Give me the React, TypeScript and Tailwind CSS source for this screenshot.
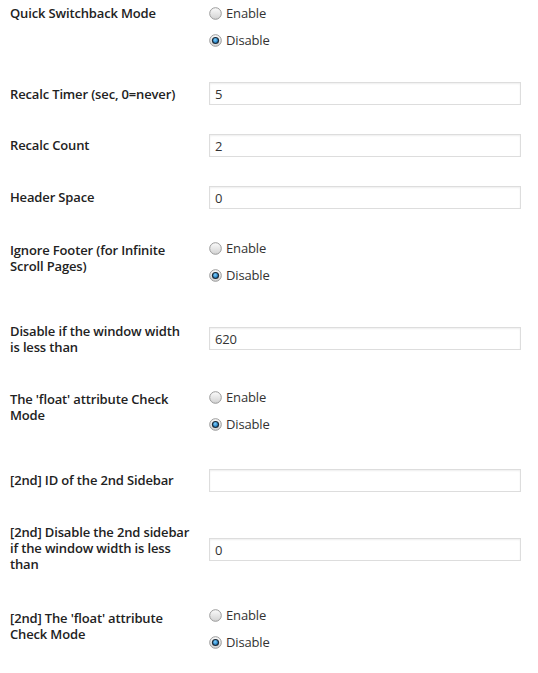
import React from 'react';

type Row =
  | { kind: 'radio'; label: string; h: string; lpt: string; cpt: string; value: 'enable' | 'disable' }
  | { kind: 'input'; label: string; h: string; lpt: string; cpt: string; value: string };

const ROWS: Row[] = [
  { kind: 'radio', label: 'Quick Switchback Mode', h: 'h-[70px]', lpt: 'pt-[5px]', cpt: 'pt-0', value: 'disable' },
  { kind: 'input', label: 'Recalc Timer (sec, 0=never)', h: 'h-[52px]', lpt: 'pt-[16px]', cpt: 'pt-[12px]', value: '5' },
  { kind: 'input', label: 'Recalc Count', h: 'h-[52px]', lpt: 'pt-[15px]', cpt: 'pt-[12px]', value: '2' },
  { kind: 'input', label: 'Header Space', h: 'h-[52px]', lpt: 'pt-[15px]', cpt: 'pt-[12px]', value: '0' },
  { kind: 'radio', label: 'Ignore Footer (for Infinite Scroll Pages)', h: 'h-[80px]', lpt: 'pt-[16px]', cpt: 'pt-[9px]', value: 'disable' },
  { kind: 'input', label: 'Disable if the window width is less than', h: 'h-[70px]', lpt: 'pt-[17px]', cpt: 'pt-[21px]', value: '620' },
  { kind: 'radio', label: "The 'float' attribute Check Mode", h: 'h-[84px]', lpt: 'pt-[15px]', cpt: 'pt-[8px]', value: 'disable' },
  { kind: 'input', label: '[2nd] ID of the 2nd Sidebar', h: 'h-[45px]', lpt: 'pt-[12px]', cpt: 'pt-[9px]', value: '' },
  { kind: 'input', label: '[2nd] Disable the 2nd sidebar if the window width is less than', h: 'h-[88px]', lpt: 'pt-[19px]', cpt: 'pt-[33px]', value: '0' },
  { kind: 'radio', label: "[2nd] The 'float' attribute Check Mode", h: 'h-[80px]', lpt: 'pt-[17px]', cpt: 'pt-[9px]', value: 'disable' },
];

function RadioDot({ checked }: { checked: boolean }) {
  return (
    <svg width="13" height="13" viewBox="0 0 13 13" className="shrink-0">
      <defs>
        <linearGradient id="rg" x1="0" y1="0" x2="0" y2="1">
          <stop offset="0" stopColor="#fbfbfb" />
          <stop offset="1" stopColor="#d2d2d2" />
        </linearGradient>
        <radialGradient id="dot" cx="0.4" cy="0.35" r="0.7">
          <stop offset="0" stopColor="#7fd0ff" />
          <stop offset="1" stopColor="#1673b8" />
        </radialGradient>
      </defs>
      <circle cx="6.5" cy="6.5" r="5.8" fill="url(#rg)" stroke="#9a9a9a" strokeWidth="1" />
      {checked && (
        <>
          <circle cx="6.5" cy="6.5" r="3.6" fill="#1b2a38" />
          <circle cx="6.5" cy="6.5" r="2.4" fill="url(#dot)" />
        </>
      )}
    </svg>
  );
}

function RadioGroup({ value }: { value: 'enable' | 'disable' }) {
  return (
    <div className="flex flex-col">
      {(['enable', 'disable'] as const).map((opt) => (
        <label key={opt} className="flex items-center h-[27px] gap-[4px] text-[#333]">
          <RadioDot checked={value === opt} />
          <span>{opt === 'enable' ? 'Enable' : 'Disable'}</span>
        </label>
      ))}
    </div>
  );
}

export default function App() {
  return (
    <div
      className="w-[538px] h-[673px] overflow-hidden bg-white pl-[10px] text-[13px] tracking-[-0.15px]"
      style={{ fontFamily: '"Open Sans", "Noto Sans", sans-serif' }}
    >
      {ROWS.map((row) => (
        <div key={row.label} className={`flex ${row.h}`}>
          <div className={`w-[190px] shrink-0 pr-[10px] ${row.lpt}`}>
            <div className="font-semibold text-[#222] leading-[16px]">{row.label}</div>
          </div>
          <div className={`flex-1 pl-[9px] pr-[17px] ${row.cpt}`}>
            {row.kind === 'radio' ? (
              <RadioGroup value={row.value} />
            ) : (
              <input
                readOnly
                value={row.value}
                className="block w-full h-[23px] border border-[#ddd] bg-white px-[5px] text-[13px] text-[#333] shadow-[inset_0_1px_2px_rgba(0,0,0,0.07)] outline-none"
              />
            )}
          </div>
        </div>
      ))}
    </div>
  );
}
